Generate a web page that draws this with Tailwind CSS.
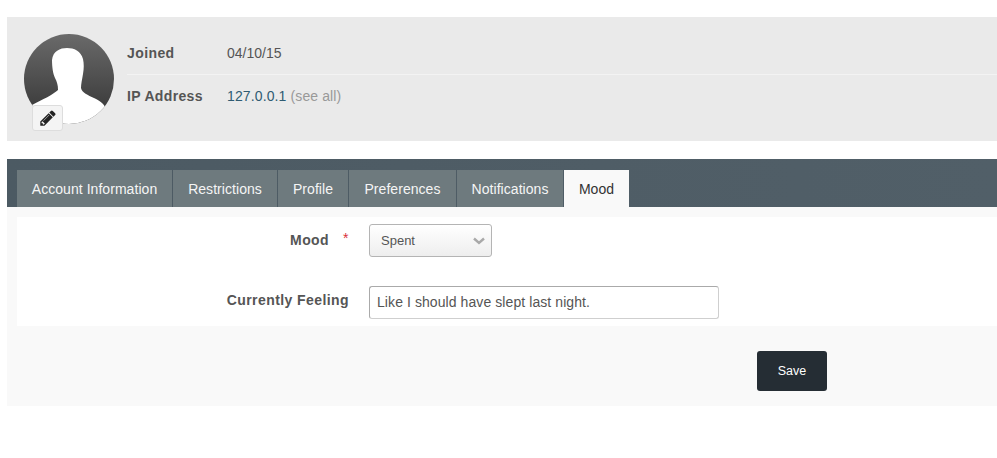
<!DOCTYPE html>
<html>
<head>
<meta charset="utf-8">
<script src="https://cdn.jsdelivr.net/npm/@tailwindcss/browser@4"></script>
</head>
<body class="bg-white font-['Liberation_Sans',Arial,sans-serif] text-[14px] text-[#555]">
<div class="pl-[7px] pt-[17px] h-[458px] overflow-hidden">
  <section class="flex h-[124px] bg-[#eaeaea] pl-[17px] pt-[17px]">
    <div class="relative w-[90px] h-[90px] shrink-0">
      <svg width="90" height="90" viewBox="0 0 90 90" class="block">
        <defs>
          <linearGradient id="g" x1="0" y1="0" x2="0" y2="1"><stop offset="0" stop-color="#6a6a6a"/><stop offset="1" stop-color="#333"/></linearGradient>
          <clipPath id="c"><circle cx="45" cy="45" r="45"/></clipPath>
        </defs>
        <circle cx="45" cy="45" r="45" fill="url(#g)"/>
        <path clip-path="url(#c)" fill="#fff" d="M43 14C36 14 29 17 28 26C28 33 29 40 31 44C33 48 34 51 34 56C30 60 18 66 8 71V90H82V74C78 68 76 67 70 64C64 61 58 59 57 54C57 50 58 46 59 40C60 34 60 30 59 25C57 17 50 14 43 14Z"/>
      </svg>
      <div class="absolute left-[8px] top-[71px] flex h-[26px] w-[31px] items-center justify-center rounded-[3px] border border-[#ddd] bg-[#f4f4f4]">
        <svg width="18" height="18" viewBox="0 0 1792 1792"><path fill="#222" d="M491 1536l91-91-235-235-91 91v107h128v128h107zm523-928q0-22-22-22-10 0-17 7l-542 542q-7 7-7 17 0 22 22 22 10 0 17-7l542-542q7-7 7-17zm-54-192l416 416-832 832h-416v-416zm683 96q0 53-37 90l-166 166-416-416 166-165q36-38 90-38 53 0 91 38l235 234q37 39 37 91z"/></svg>
      </div>
    </div>
    <div class="ml-[13px] flex-1">
      <div class="flex h-[41px] items-center border-b border-[#f3f3f3] pb-[1px]">
        <span class="w-[100px] font-bold tracking-[0.4px]">Joined</span><span>04/10/15</span>
      </div>
      <div class="flex h-[43px] items-center">
        <span class="w-[100px] font-bold tracking-[0.35px]">IP Address</span><span class="tracking-[0.12px]"><a class="text-[#2f5b72]">127.0.0.1</a> <span class="text-[#999]">(see all)</span></span>
      </div>
    </div>
  </section>

  <section class="mt-[18px] h-[247px] bg-[#f9f9f9]">
    <nav class="flex h-[48px] items-end gap-px bg-gradient-to-r from-[#4c5a63] to-[#515f68] pl-[10px] tracking-[0.05px]">
      <a class="flex h-[37px] w-[155px] items-center justify-center bg-[#6e7a7e] pt-[1px] text-[#f5f5f5]">Account Information</a>
      <a class="flex h-[37px] w-[104px] items-center justify-center bg-[#6e7a7e] pt-[1px] text-[#f5f5f5]">Restrictions</a>
      <a class="flex h-[37px] w-[70px] items-center justify-center bg-[#6e7a7e] pt-[1px] text-[#f5f5f5]">Profile</a>
      <a class="flex h-[37px] w-[107px] items-center justify-center bg-[#6e7a7e] pt-[1px] text-[#f5f5f5]">Preferences</a>
      <a class="flex h-[37px] w-[106px] items-center justify-center bg-[#6e7a7e] pt-[1px] text-[#f5f5f5]">Notifications</a>
      <a class="flex h-[37px] w-[65px] items-center justify-center bg-[#f9f9f9] pt-[1px] text-[#333]">Mood</a>
    </nav>
    <form class="mt-[10px] ml-[10px] h-[109px] bg-white">
      <div class="flex h-[69px] items-start pt-[7px]">
        <label class="flex h-[33px] w-[332px] items-center justify-end font-bold tracking-[0.4px]">Mood<span class="ml-[14px] w-[6px] pb-[4px] font-normal text-[#d9303a]">*</span></label>
        <div class="ml-[20px] flex h-[33px] w-[123px] items-center justify-between rounded-[3px] border border-[#b4b4b4] bg-gradient-to-b from-white to-[#eeeeee] pl-[11px] pr-[5px] text-[13px]">
          <span>Spent</span>
          <svg width="14" height="10" viewBox="0 0 14 10"><path d="M2 2.500l5 4.500 5-4.500" fill="none" stroke="#a9a9a9" stroke-width="2.400"/></svg>
        </div>
      </div>
      <div class="flex items-start">
        <label class="flex h-[29px] w-[332px] items-center justify-end font-bold tracking-[0.42px]">Currently Feeling</label>
        <div class="ml-[20px] flex h-[33px] w-[350px] items-center rounded-[3px] border border-[#cfcfcf] border-t-[#aaa] border-l-[#aaa] pl-[7px] tracking-[0.08px]">Like I should have slept last night.</div>
      </div>
    </form>
    <div class="flex pl-[750px] pt-[25px]">
      <button class="h-[40px] w-[70px] rounded-[3px] bg-[#252d34] text-[12.5px] text-white">Save</button>
    </div>
  </section>
</div>
</body>
</html>
